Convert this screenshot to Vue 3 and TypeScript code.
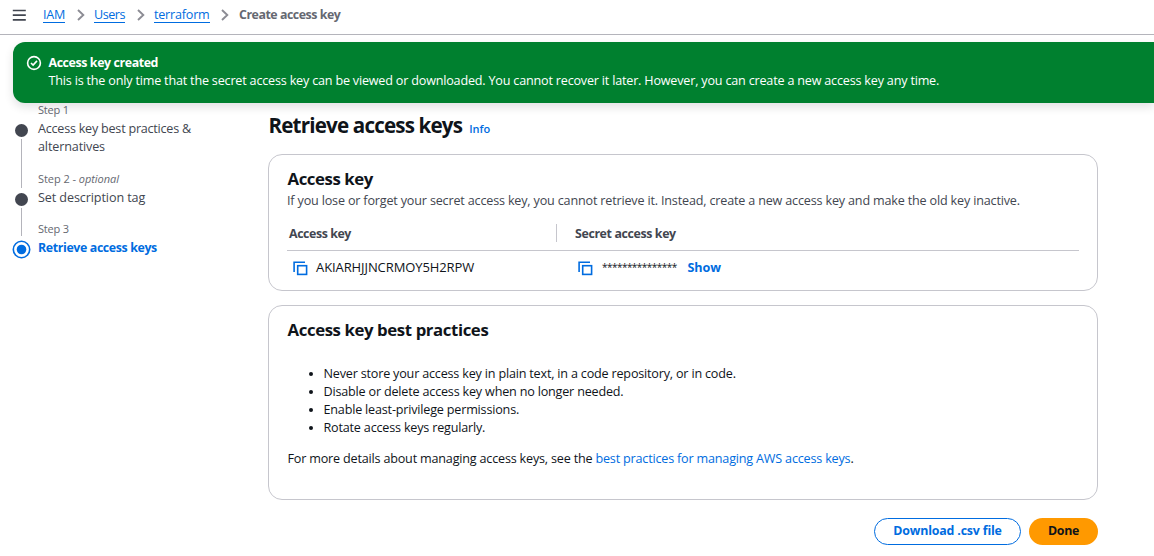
<script setup lang="ts">
const crumbs = [
  { label: 'IAM', cls: 'c-iam' },
  { label: 'Users', cls: 'c-users' },
  { label: 'terraform', cls: 'c-tf' },
]
const tips: string[] = [
  'Never store your access key in plain text, in a code repository, or in code.',
  'Disable or delete access key when no longer needed.',
  'Enable least-privilege permissions.',
  'Rotate access keys regularly.',
]
</script>

<template>
  <div class="page">
    <header class="topbar">
      <svg class="menu" width="14" height="14" viewBox="0 0 14 14"><path d="M.8 2.5h13M.8 7.2h13M.8 11.9h13" stroke="#424650" stroke-width="1.7" /></svg>
      <nav class="crumbs">
        <template v-for="c in crumbs" :key="c.label">
          <a class="crumb" :class="c.cls">{{ c.label }}</a>
          <svg class="chev" width="8" height="12" viewBox="0 0 8 12"><path d="M1 1l5.3 5L1 11" fill="none" stroke="#8c8c94" stroke-width="1.9" /></svg>
        </template>
        <span class="current">Create access key</span>
      </nav>
    </header>

    <section class="flash">
      <svg class="ok" width="16" height="16" viewBox="0 0 16 16" fill="none" stroke="#fff" stroke-width="1.6"><circle cx="8" cy="8" r="6.4" /><path d="M5 8l2.1 2.1L11 5.9" /></svg>
      <div class="flash-body">
        <div class="flash-title">Access key created</div>
        <div class="flash-text">This is the only time that the secret access key can be viewed or downloaded. You cannot recover it later. However, you can create a new access key any time.</div>
      </div>
    </section>

    <div class="body">
      <aside class="steps">
        <div class="step first">
          <div class="rail"><svg class="dot" width="19" height="19" viewBox="0 0 19 19"><circle cx="9.5" cy="9.5" r="6.5" fill="#424650" /></svg><i class="line"></i></div>
          <div>
            <div class="num">Step 1</div>
            <div class="name"><span class="n1">Access key best practices &amp;</span><br /><span class="n2">alternatives</span></div>
          </div>
        </div>
        <div class="step second">
          <div class="rail"><svg class="dot" width="19" height="19" viewBox="0 0 19 19"><circle cx="9.5" cy="9.5" r="6.5" fill="#424650" /></svg><i class="line"></i></div>
          <div>
            <div class="num two">Step 2 - <em>optional</em></div>
            <div class="name n3">Set description tag</div>
          </div>
        </div>
        <div class="step">
          <div class="rail"><svg class="dot" width="19" height="19" viewBox="0 0 19 19"><circle cx="9.5" cy="9.5" r="8.2" fill="none" stroke="#006ce0" stroke-width="1.6" /><circle cx="9.5" cy="9.5" r="4.8" fill="#006ce0" /></svg></div>
          <div>
            <div class="num">Step 3</div>
            <div class="name active">Retrieve access keys</div>
          </div>
        </div>
      </aside>

      <main class="main">
        <div class="heading"><h1>Retrieve access keys</h1><a class="info">Info</a></div>

        <section class="card keys">
          <h2>Access key</h2>
          <p class="desc">If you lose or forget your secret access key, you cannot retrieve it. Instead, create a new access key and make the old key inactive.</p>
          <div class="row head">
            <div class="th">Access key</div>
            <div class="th secret">Secret access key</div>
          </div>
          <div class="row data">
            <div class="cell">
              <svg class="copy" width="15" height="15" viewBox="0 0 15 15" fill="none" stroke="#006ce0" stroke-width="1.6"><path d="M1.1 11V1.3H12" /><rect x="4.7" y="4.7" width="8.9" height="8.7" /></svg>
              <span class="key">AKIARHJJNCRMOY5H2RPW</span>
            </div>
            <div class="cell">
              <svg class="copy" width="15" height="15" viewBox="0 0 15 15" fill="none" stroke="#006ce0" stroke-width="1.6"><path d="M1.1 11V1.3H12" /><rect x="4.7" y="4.7" width="8.9" height="8.7" /></svg>
              <span class="stars">***************</span>
              <a class="show">Show</a>
            </div>
          </div>
        </section>

        <section class="card practices">
          <h2 class="wide">Access key best practices</h2>
          <ul>
            <li v-for="t in tips" :key="t">{{ t }}</li>
          </ul>
          <p class="more">For more details about managing access keys, see the <a>best practices for managing AWS access keys</a>.</p>
        </section>

        <div class="actions">
          <button class="btn download">Download .csv file</button>
          <button class="btn done">Done</button>
        </div>
      </main>
    </div>
  </div>
</template>

<style>
body { background: #fff; }
</style>

<style scoped>
.page { width: 1154px; height: 556px; overflow: hidden; box-sizing: border-box; font: 12.6px/18px "Open Sans", "Noto Sans", sans-serif; color: #0f141a; letter-spacing: -0.19px; }
.page * { box-sizing: border-box; }
svg { display: block; flex: none; }
h1, h2, p, ul { margin: 0; padding: 0; }
.topbar { height: 35px; border-bottom: 1px solid #b4b4bb; display: flex; align-items: flex-start; padding: 6px 0 0 12px; }
.menu { margin-top: 2px; }
.crumbs { display: flex; margin-left: 17px; }
.crumb { color: #006ce0; height: 17px; border-bottom: 1px solid #006ce0; white-space: nowrap; }
.c-iam { width: 22px; letter-spacing: -0.26px; }
.c-users { width: 31px; letter-spacing: -0.48px; }
.c-tf { width: 56px; letter-spacing: -0.22px; }
.chev { margin: 3px 9px 0 12px; }
.c-tf + .chev { margin-left: 11px; }
.current { color: #656871; font-weight: 700; font-size: 12.4px; letter-spacing: -0.47px; margin-left: 1px; }
.flash { position: relative; margin: 7px 0 0 13px; height: 61px; background: #00802f; color: #fff; border-radius: 12px 0 0 12px; display: flex; padding: 12px 0 0 13px; box-shadow: 0 4px 10px rgba(0, 7, 22, 0.12); }
.ok { margin: 1px 6.5px 0 0; }
.flash-title { font-weight: 700; font-size: 12.4px; letter-spacing: -0.4px; }
.flash-text { white-space: nowrap; letter-spacing: -0.194px; }
.body { display: flex; }
.steps { width: 268px; padding-left: 12px; }
.step { display: flex; }
.first { height: 69px; }
.second { height: 50px; }
.rail { width: 19px; margin-right: 7px; display: flex; flex-direction: column; align-items: center; padding-top: 17.5px; }
.line { width: 1px; flex: 1; background: #b4b4bb; margin: -1px 0 -16px; }
.second .line { margin-bottom: -14px; }
.num { font-size: 11px; line-height: 14px; padding-bottom: 2px; letter-spacing: -0.17px; color: #656871; }
.two { letter-spacing: -0.05px; }
.name { color: #424650; white-space: nowrap; padding-top: 1px; }
.n1 { letter-spacing: -0.235px; }
.n2 { letter-spacing: -0.14px; }
.n3 { letter-spacing: -0.1px; }
.active { color: #006ce0; font-weight: 700; font-size: 12.4px; letter-spacing: -0.38px; }
.main { width: 830px; }
.heading { display: flex; height: 51px; align-items: baseline; padding-top: 8px; }
h1 { font-size: 20.6px; line-height: 28px; font-weight: 700; letter-spacing: -0.83px; margin-left: 0.5px; }
.info { font-size: 11px; font-weight: 600; color: #006ce0; letter-spacing: 0; margin-left: 7px; }
.card { border: 1px solid #c6c6cd; border-radius: 14px; padding: 0 18px; }
.keys { height: 137px; padding-top: 13px; }
h2 { font-size: 16.8px; line-height: 22px; font-weight: 700; letter-spacing: -0.43px; margin-left: 0.5px; }
.wide { letter-spacing: -0.4px; }
.desc { color: #424650; letter-spacing: -0.177px; white-space: nowrap; padding-top: 2px; }
.row { display: grid; grid-template-columns: 270px 1fr; }
.head { margin-top: 14px; height: 27px; border-bottom: 1px solid #c6c6cd; }
.th { font-weight: 700; font-size: 12.4px; line-height: 20px; color: #424650; padding-left: 2px; letter-spacing: -0.42px; height: 18px; border-right: 1px solid #c6c6cd; }
.secret { padding-left: 18px; border: 0; letter-spacing: -0.38px; }
.data { padding-top: 8px; }
.cell { display: flex; padding-left: 6px; }
.cell + .cell { padding-left: 21px; }
.copy { margin: 2px 8px 0 0; }
.key { font-size: 13px; line-height: 17px; letter-spacing: -0.09px; }
.stars { font-size: 10px; letter-spacing: -0.53px; width: 85.5px; margin-left: 1px; line-height: 17px; }
.show { color: #006ce0; font-weight: 700; letter-spacing: -0.08px; }
.practices { height: 195px; margin-top: 14px; padding-top: 13px; }
ul { margin-top: 24px; padding-left: 36.5px; }
.more { margin: 13px 0 0 0.5px; }
.more a { color: #006ce0; letter-spacing: -0.19px; }
.actions { display: flex; justify-content: flex-end; gap: 8px; margin-top: 18px; }
.btn { height: 27px; border-radius: 14px; font: inherit; font-size: 12.4px; font-weight: 700; padding: 0 0 2px; }
.download { width: 147px; border: 1.5px solid #006ce0; background: #fff; color: #006ce0; letter-spacing: -0.17px; }
.done { width: 69px; border: 0; background: #ff9900; color: #0f141a; letter-spacing: -0.3px; }
</style>
